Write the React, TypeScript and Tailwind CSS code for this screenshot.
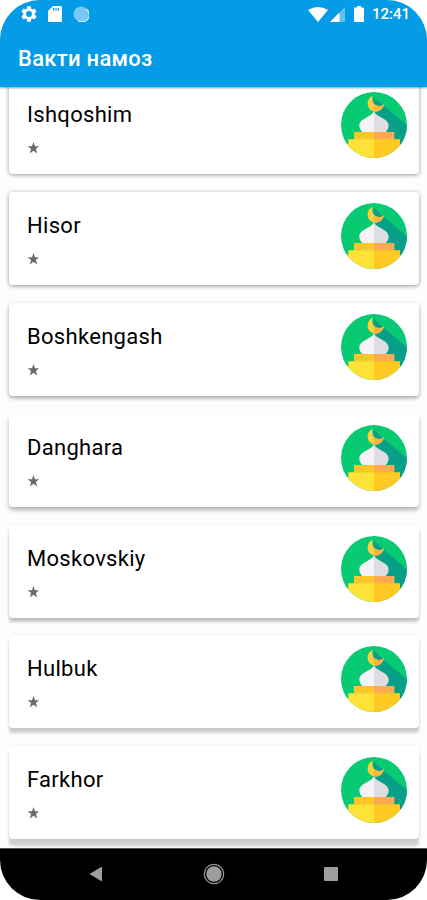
import React from "react";

const places = [
  { name: "Ishqoshim", shadow: "shadow-[0_1px_4px_rgba(0,0,0,0.4)]" },
  { name: "Hisor", shadow: "shadow-[0_1px_4px_rgba(0,0,0,0.42)]" },
  { name: "Boshkengash", shadow: "shadow-[0_2px_4px_rgba(0,0,0,0.36)]" },
  { name: "Danghara", shadow: "shadow-[0_3px_4px_rgba(0,0,0,0.3)]" },
  { name: "Moskovskiy", shadow: "shadow-[0_4px_3px_rgba(0,0,0,0.22),0_0_3px_rgba(0,0,0,0.08)]" },
  { name: "Hulbuk", shadow: "shadow-[0_5px_3px_rgba(0,0,0,0.19),0_0_3px_rgba(0,0,0,0.08)]" },
  { name: "Farkhor", shadow: "shadow-[0_7px_3px_rgba(0,0,0,0.18),0_0_3px_rgba(0,0,0,0.08)]" },
];

function MosqueIcon() {
  return (
    <svg viewBox="0 0 198 198" className="h-[66px] w-[66px] shrink-0">
      <defs>
        <clipPath id="disc">
          <circle cx="99" cy="99" r="99" />
        </clipPath>
      </defs>
      <g clipPath="url(#disc)">
        <rect width="198" height="198" fill="#07ca73" />
        <path d="M97 12 L118 32 L202 104 V160 H176 V142 H160 V121 H134 L99 57 Z" fill="#089f88" />
        <path d="M96 11 C75 18 74 49 95 57 C109 63 126 53 129 36 C122 43 112 44 105 40 C95 35 91 22 96 11 Z" fill="#ffcf3e" />
        <path d="M99 58.500 C113 61 126 52 129 36 C122 43 112 44 105 40 L99 35 Z" fill="#f9b73f" />
        <path d="M99 57 C94 76 55 77 55 101 C55 110 60 116 65 121 H99 Z" fill="#f5f3f5" />
        <path d="M99 57 C104 76 143 77 143 101 C143 110 138 116 133 121 H99 Z" fill="#dedee2" />
        <rect x="39" y="120" width="61" height="23" fill="#ffc629" />
        <rect x="99" y="120" width="61" height="23" fill="#ffaa50" />
        <path d="M22 142 H99 V198 H0 V156 H22 Z" fill="#ffe238" />
        <path d="M99 142 H177 V156 H198 V198 H99 Z" fill="#ffcb22" />
      </g>
    </svg>
  );
}

function StatusBar() {
  return (
    <div className="flex h-[28px] items-center pl-[21px] pr-[17px] text-white">
      <svg viewBox="2 2 20 20" className="h-[16px] w-[16px]" fill="currentColor">
        <path d="M19.14 12.94c.04-.3.06-.61.06-.94s-.02-.64-.07-.94l2.03-1.58a.49.49 0 0 0 .12-.61l-1.92-3.32a.49.49 0 0 0-.59-.22l-2.39.96a7 7 0 0 0-1.62-.94l-.36-2.54A.48.48 0 0 0 13.92 2.4h-3.84c-.24 0-.43.17-.47.41l-.36 2.54c-.59.24-1.13.57-1.62.94l-2.39-.96a.49.49 0 0 0-.59.22L2.74 8.87a.48.48 0 0 0 .12.61l2.03 1.58c-.05.3-.09.63-.09.94s.02.64.07.94l-2.03 1.58a.49.49 0 0 0-.12.61l1.92 3.32c.12.22.37.29.59.22l2.39-.96c.5.38 1.03.7 1.62.94l.36 2.54c.05.24.24.41.48.41h3.84c.24 0 .44-.17.47-.41l.36-2.54a7 7 0 0 0 1.62-.94l2.39.96c.22.08.47 0 .59-.22l1.92-3.32a.48.48 0 0 0-.12-.61ZM12 15.6a3.6 3.6 0 1 1 0-7.2 3.6 3.6 0 0 1 0 7.2Z" />
      </svg>
      <svg viewBox="0 0 14 16" className="ml-[11px] h-[16px] w-[14px]" fill="currentColor">
        <path fillRule="evenodd" d="M5 0h7.5Q14 0 14 1.5v13q0 1.500-1.500 1.500h-11Q0 16 0 14.500V5ZM5 2v2.500h1.300V2Zm2.400 0v2.500h1.300V2Zm2.400 0v2.500h1.300V2Z" />
      </svg>
      <svg viewBox="0 0 16 16" className="ml-[11px] h-[16px] w-[16px]">
        <circle cx="8" cy="8" r="7.500" fill="#77c8f2" />
        <path d="M13.200 3 A7 7 0 0 1 5 14.500" fill="none" stroke="#c9ebfb" strokeWidth="1.500" />
      </svg>
      <div className="ml-auto flex items-center">
        <svg viewBox="0 0 20 15" className="h-[15px] w-[20px]" fill="currentColor">
          <path d="M10 15 L0 3 Q10 -3 20 3 Z" />
        </svg>
        <svg viewBox="0 0 15 15" className="ml-[2px] h-[15px] w-[15px]">
          <path d="M0 15 L15 0 V15 Z" fill="#66c1f0" />
          <path d="M0 15 L9.500 5.500 V15 Z" fill="white" />
        </svg>
        <svg viewBox="0 0 10 16" className="ml-[9px] h-[16px] w-[10px]" fill="currentColor">
          <path d="M3 0h4v1.500h2q1 0 1 1V15q0 1-1 1H1q-1 0-1-1V2.500q0-1 1-1h2Z" />
        </svg>
        <span className="ml-[8px] w-[38px] whitespace-nowrap text-[15px] font-medium leading-[16px]">12:41</span>
      </div>
    </div>
  );
}

export default function App() {
  return (
    <div className="h-[900px] w-[427px] overflow-hidden bg-white font-['Roboto','Noto_Sans',sans-serif]">
      <div className="flex h-full flex-col overflow-hidden rounded-[40px] bg-[#fdfdfd]">
        <header className="z-10 h-[87px] shrink-0 bg-[#049be7] shadow-[0_1px_2px_rgba(0,0,0,0.4)]">
          <StatusBar />
          <h1 className="pl-[18px] pt-[16px] text-[22px] font-medium leading-[30px] tracking-[0.28px] text-white">Вакти намоз</h1>
        </header>
        <main className="min-h-0 flex-1 overflow-hidden">
          <div className="-mt-[6px] flex flex-col gap-[17.9px] pl-[9px] pr-[8px]">
            {places.map((place) => (
              <article
                key={place.name}
                className={`flex h-[93px] items-start justify-between rounded-[4px] bg-white pl-[18px] pr-[12.5px] pt-[11px] ${place.shadow}`}
              >
                <div className="pt-[9px]">
                  <h2 className="text-[22px] leading-[28px] tracking-[0.3px] text-black">{place.name}</h2>
                  <svg viewBox="0 0 24 24" className="mt-[13px] h-[12px] w-[12px]" fill="#6b6b6b">
                    <path d="M13 0l3 8.500h8l-6.200 5.500 2.700 9L13 17.600 5.500 23l2.700-9L1 8.500h9Z" />
                  </svg>
                </div>
                <MosqueIcon />
              </article>
            ))}
          </div>
        </main>
        <nav className="z-10 flex h-[52px] shrink-0 items-center border-t border-[#555] bg-black pb-px pl-[89px] pr-[89px]">
          <svg viewBox="0 0 13 16" className="h-[16px] w-[13px]">
            <path d="M13 .5v15L.5 8Z" fill="#9e9e9e" />
          </svg>
          <svg viewBox="0 0 22 22" className="ml-[101px] h-[22px] w-[22px]">
            <circle cx="11" cy="11" r="9.700" fill="none" stroke="#969696" strokeWidth="1.200" />
            <circle cx="11" cy="11" r="7.700" fill="#9e9e9e" />
          </svg>
          <div className="ml-auto h-[14px] w-[14px] rounded-[1px] bg-[#9e9e9e]" />
        </nav>
      </div>
    </div>
  );
}
